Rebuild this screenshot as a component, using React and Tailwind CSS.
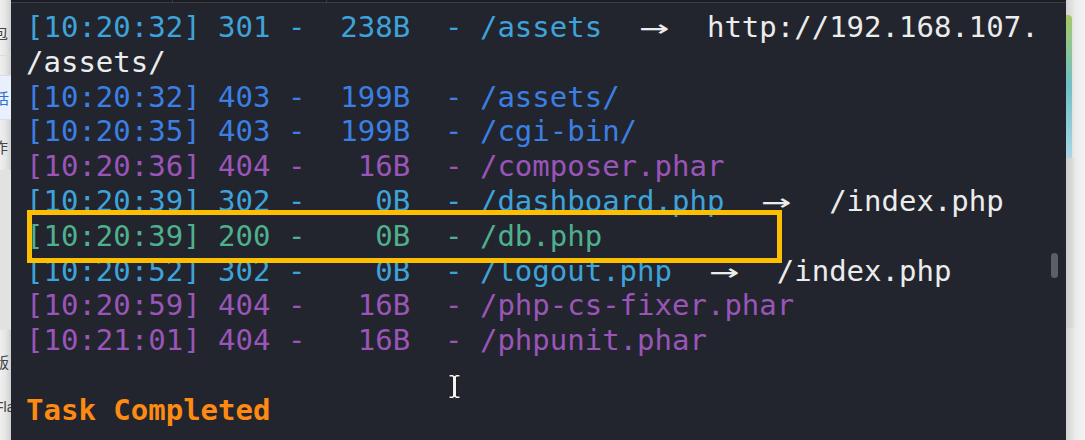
const CYAN = 'text-[#3ea3da]'
const BLUE = 'text-[#3b7fe3]'
const PURPLE = 'text-[#9a55b8]'
const GREEN = 'text-[#4fb08d]'

const rows = [
  { time: '10:20:32', status: '301', size: '238B', path: '/assets', color: CYAN, to: 'http://192.168.107.' },
  { wrap: '/assets/' },
  { time: '10:20:32', status: '403', size: '199B', path: '/assets/', color: BLUE },
  { time: '10:20:35', status: '403', size: '199B', path: '/cgi-bin/', color: BLUE },
  { time: '10:20:36', status: '404', size: '16B', path: '/composer.phar', color: PURPLE },
  { time: '10:20:39', status: '302', size: '0B', path: '/dashboard.php', color: CYAN, to: '/index.php' },
  { time: '10:20:39', status: '200', size: '0B', path: '/db.php', color: GREEN },
  { time: '10:20:52', status: '302', size: '0B', path: '/logout.php', color: CYAN, to: '/index.php' },
  { time: '10:20:59', status: '404', size: '16B', path: '/php-cs-fixer.phar', color: PURPLE },
  { time: '10:21:01', status: '404', size: '16B', path: '/phpunit.phar', color: PURPLE },
]

function Row({ r }) {
  if (r.wrap) return <div className="text-[#ececec]">{r.wrap}</div>
  return (
    <div>
      <span className={r.color}>
        {`[${r.time}] ${r.status} - ${r.size.padStart(5)}  - ${r.path}`}
      </span>
      {r.to && (
        <span className="text-[#ececec]">
          {'  '}
          <span className="inline-block w-[2ch] text-center scale-x-[1.7]">→</span>
          {'  '}
          {r.to}
        </span>
      )}
    </div>
  )
}

// the window behind the terminal, only its right edge shows
function LeftStrip() {
  return (
    <div className="w-[11px] shrink-0 overflow-hidden flex flex-col bg-gradient-to-r from-[#efefef] via-[#e6e6e6] to-[#cfcfcf] font-['Noto_Sans_CJK_SC',sans-serif] text-[15px] leading-none text-[#444]">
      <div className="h-[56px] pt-[25px] border-b border-[#dcdcdc] -ml-[7px]">包</div>
      <div className="h-[19px]" />
      <div className="h-[45px] flex items-center bg-[#eaf0fb] border-y border-[#d3def2] -ml-[6px] text-[#2f6fd6]">话</div>
      <div className="h-[50px] pt-[19px] -ml-[7px]">作</div>
      <div className="h-[160px] bg-[#e2e2e2]" />
      <div className="pt-[24px] -ml-[6px]">版</div>
      <div className="pt-[31px] -ml-[5px] font-['Liberation_Sans',sans-serif] text-[14px]">Fla</div>
    </div>
  )
}

function RightStrip() {
  return (
    <div className="w-[19px] shrink-0 flex flex-col pt-[15px] bg-gradient-to-r from-[#d2d2d2] via-[#ececec] to-[#f3f3f3]">
      <div className="w-[6px] h-[143px] rounded-tr-[4px] bg-gradient-to-b from-[#a5c860] via-[#6fc0c8] to-[#a9d6e6]" />
      <div className="w-[10px] h-[170px] bg-gradient-to-r from-[#cfcfcf] to-transparent" />
    </div>
  )
}

function IBeam() {
  return (
    <svg className="absolute left-[437px] top-[373px]" width="13" height="27" viewBox="0 0 13 27">
      <path
        d="M1 1.5h4l1.5 1.5 1.5-1.5h4v2.5h-3.5v19h3.5v2.5h-4l-1.5-1.5-1.5 1.5h-4v-2.5h3.5v-19h-3.5z"
        fill="#f4f4f4"
        stroke="#222"
        strokeWidth="1"
      />
    </svg>
  )
}

export default function App() {
  return (
    <div className="w-[1085px] h-[440px] flex overflow-hidden bg-[#ececec]">
      <LeftStrip />
      <div className="relative flex-1 bg-[#22252e] font-['DejaVu_Sans_Mono',monospace] text-[29px] leading-[34.8px]">
        {/* tab bar remnant */}
        <div className="flex h-[3px] bg-[#1b1d23] border-b border-[#3a3d46]">
          <div className="w-[162px] border-r border-[#3a3d46]" />
          <div className="w-[154px] border-r border-[#3a3d46]" />
        </div>
        <div className="pt-[7px] pl-[15px] whitespace-pre">
          {rows.map((r, i) => <Row key={i} r={r} />)}
          <div>&nbsp;</div>
          <div className="font-bold text-[#ff8a12]">Task Completed</div>
        </div>
        {/* highlight drawn over the db.php row */}
        <div className="absolute left-[16px] top-[210px] w-[755px] h-[53px] border-[5px] border-[#fdbf00]" />
        {/* scrollbar thumb */}
        <div className="absolute right-[8px] top-[253px] w-[7px] h-[25px] rounded-full bg-[#5c5f66]" />
        <IBeam />
      </div>
      <RightStrip />
    </div>
  )
}
